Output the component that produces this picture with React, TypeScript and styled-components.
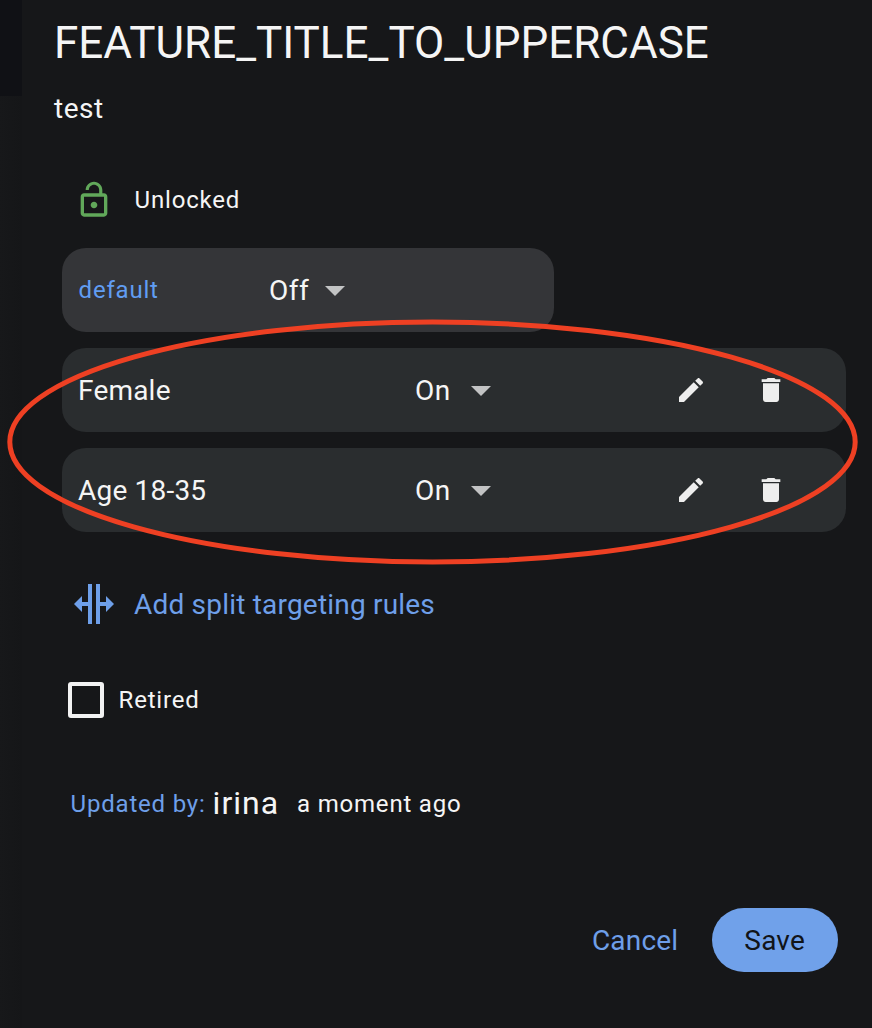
import React from "react";
import styled, { createGlobalStyle } from "styled-components";

const GlobalStyle = createGlobalStyle`
  * { box-sizing: border-box; }
  body {
    margin: 0;
    background: #161719;
    color: #f5f5f5;
    font-family: Roboto, "Liberation Sans", sans-serif;
  }
  button { font-family: inherit; border: 0; margin: 0; padding: 0; background: none; color: inherit; }
`;

const Screen = styled.div`
  position: relative;
  display: flex;
  width: 872px;
  height: 1028px;
  overflow: hidden;
  background: #161719;
`;

const Backdrop = styled.div`
  flex: 0 0 22px;
  background: linear-gradient(#101115 0 96px, transparent 96px),
    linear-gradient(90deg, #17181a, #151618);
`;

const Panel = styled.main`
  flex: 1;
  display: flex;
  flex-direction: column;
  padding: 16px 26px 0 32px;
`;

const Title = styled.h1`
  margin: 0;
  font-size: 44px;
  font-weight: 400;
  line-height: 54px;
  white-space: nowrap;
`;

const Description = styled.p`
  margin: 23px 0 0;
  font-size: 28px;
  line-height: 32px;
  letter-spacing: 0.5px;
`;

const Label = styled.span<{ $accent?: string }>`
  padding-left: 0.6px;
  font-size: 24px;
  line-height: 32px;
  letter-spacing: 0.8px;
  white-space: nowrap;
  color: ${(p) => p.$accent ?? "inherit"};
`;

const LockRow = styled.div`
  display: flex;
  align-items: center;
  gap: 20px;
  height: 40px;
  margin: 55px 0 0 20px;
`;

const Rules = styled.section`
  display: flex;
  flex-direction: column;
  gap: 16px;
  margin: 28px 0 0 8px;
`;

const RuleCard = styled.div<{ $base?: boolean }>`
  display: flex;
  align-items: center;
  width: ${(p) => (p.$base ? 492 : 784)}px;
  height: 84px;
  padding-left: 16px;
  border-radius: 24px;
  background: ${(p) => (p.$base ? "#343538" : "#2a2d2f")};
`;

const RuleName = styled.div<{ $width: number; $small?: boolean }>`
  display: flex;
  flex: 0 0 ${(p) => p.$width}px;
  padding-top: ${(p) => (p.$small ? 0 : 2)}px;
  font-size: 28px;
  line-height: 32px;
  letter-spacing: 0.2px;
`;

const Select = styled.button<{ $width: number }>`
  display: flex;
  align-items: center;
  justify-content: space-between;
  width: ${(p) => p.$width}px;
  padding-top: 2px;
  font-size: 28px;
  line-height: 32px;
  letter-spacing: 0.5px;
`;

const Actions = styled.div`
  display: flex;
  gap: 48px;
  margin-left: 184px;
`;

const IconButton = styled.button`
  display: flex;
  color: #eeeeee;
`;

const AddRules = styled.button`
  display: flex;
  align-items: center;
  gap: 20px;
  height: 40px;
  margin: 52px 0 0 20px;
  color: #6e9fe9;
`;

const AddRulesText = styled.span`
  padding-top: 2px;
  font-size: 28px;
  line-height: 32px;
  letter-spacing: 0.2px;
`;

const RetiredRow = styled.label`
  display: flex;
  align-items: center;
  gap: 14px;
  height: 36px;
  margin: 58px 0 0 14px;
`;

const CheckBox = styled.span`
  width: 36px;
  height: 36px;
  border: 4px solid #f2f2f2;
  border-radius: 3px;
`;

const UpdatedRow = styled.div`
  display: flex;
  align-items: center;
  height: 40px;
  margin: 66px 0 0 16px;
`;

const Author = styled.span`
  margin: 0 17.4px 2px 7px;
  font-size: 32px;
  line-height: 38px;
  letter-spacing: 1px;
`;

const Footer = styled.footer`
  display: flex;
  justify-content: flex-end;
  margin-top: 84px;
  padding-right: 8px;
`;

const ActionButton = styled.button<{ $filled?: boolean }>`
  height: 64px;
  padding: ${(p) => (p.$filled ? "2px 33px 0 32px" : "2px 34px 0")};
  border-radius: 32px;
  background: ${(p) => (p.$filled ? "#70a1ea" : "none")};
  color: ${(p) => (p.$filled ? "#111418" : "#6e9fe9")};
  font-size: 28px;
  line-height: 32px;
  letter-spacing: 0.2px;
`;

const Highlight = styled.svg`
  position: absolute;
  left: 0;
  top: 310px;
  pointer-events: none;
`;

const LockOpen = () => (
  <svg width="40" height="40" viewBox="0 0 24 24" fill="#61a85a">
    <path d="M12 17c1.1 0 2-.9 2-2s-.9-2-2-2-2 .9-2 2 .9 2 2 2zm6-9h-1V6c0-2.76-2.24-5-5-5S7 3.24 7 6h1.9c0-1.71 1.39-3.1 3.1-3.1 1.71 0 3.1 1.39 3.1 3.1v2H6c-1.1 0-2 .9-2 2v10c0 1.1.9 2 2 2h12c1.1 0 2-.9 2-2V10c0-1.1-.9-2-2-2zm0 12H6V10h12v10z" />
  </svg>
);

const Caret = () => (
  <svg width="20" height="10" viewBox="0 0 20 10" fill="#c2c3c4">
    <path d="M0 0h20L10 10z" />
  </svg>
);

const Pencil = () => (
  <svg width="32" height="32" viewBox="0 0 24 24" fill="currentColor">
    <path d="M3 17.25V21h3.75L17.81 9.94l-3.75-3.75L3 17.25zM20.71 7.04c.39-.39.39-1.02 0-1.41l-2.34-2.34c-.39-.39-1.02-.39-1.41 0l-1.83 1.83 3.75 3.75 1.83-1.83z" />
  </svg>
);

const Trash = () => (
  <svg width="32" height="32" viewBox="0 0 24 24" fill="currentColor">
    <path d="M6 19c0 1.1.9 2 2 2h8c1.1 0 2-.9 2-2V7H6v12zM19 4h-3.5l-1-1h-5l-1 1H5v2h14V4z" />
  </svg>
);

const Split = () => (
  <svg width="40" height="40" viewBox="0 0 40 40" fill="currentColor">
    <path d="M14 0h4v40h-4V22H8v6l-8-8 8-8v6h6zM26 0h-4v40h4V22h6v6l8-8-8-8v6h-6z" />
  </svg>
);

const rules = ["Female", "Age 18-35"];

export default function App() {
  return (
    <>
      <GlobalStyle />
      <Screen>
        <Backdrop />
        <Panel>
          <Title>FEATURE_TITLE_TO_UPPERCASE</Title>
          <Description>test</Description>
          <LockRow>
            <LockOpen />
            <Label>Unlocked</Label>
          </LockRow>
          <Rules>
            <RuleCard $base>
              <RuleName $width={191} $small>
                <Label $accent="#619df2">default</Label>
              </RuleName>
              <Select $width={76}>
                Off
                <Caret />
              </Select>
            </RuleCard>
            {rules.map((name) => (
              <RuleCard key={name}>
                <RuleName $width={337}>{name}</RuleName>
                <Select $width={76}>
                  On
                  <Caret />
                </Select>
                <Actions>
                  <IconButton aria-label="Edit">
                    <Pencil />
                  </IconButton>
                  <IconButton aria-label="Delete">
                    <Trash />
                  </IconButton>
                </Actions>
              </RuleCard>
            ))}
          </Rules>
          <AddRules>
            <Split />
            <AddRulesText>Add split targeting rules</AddRulesText>
          </AddRules>
          <RetiredRow>
            <CheckBox />
            <Label>Retired</Label>
          </RetiredRow>
          <UpdatedRow>
            <Label $accent="#6e9fe9">Updated by:</Label>
            <Author>irina</Author>
            <Label>a moment ago</Label>
          </UpdatedRow>
          <Footer>
            <ActionButton>Cancel</ActionButton>
            <ActionButton $filled>Save</ActionButton>
          </Footer>
        </Panel>
        <Highlight width="872" height="264" viewBox="0 310 872 264">
          <ellipse cx="432.5" cy="442" rx="422.7" ry="120" fill="none" stroke="#ee4023" strokeWidth="5" />
        </Highlight>
      </Screen>
    </>
  );
}
